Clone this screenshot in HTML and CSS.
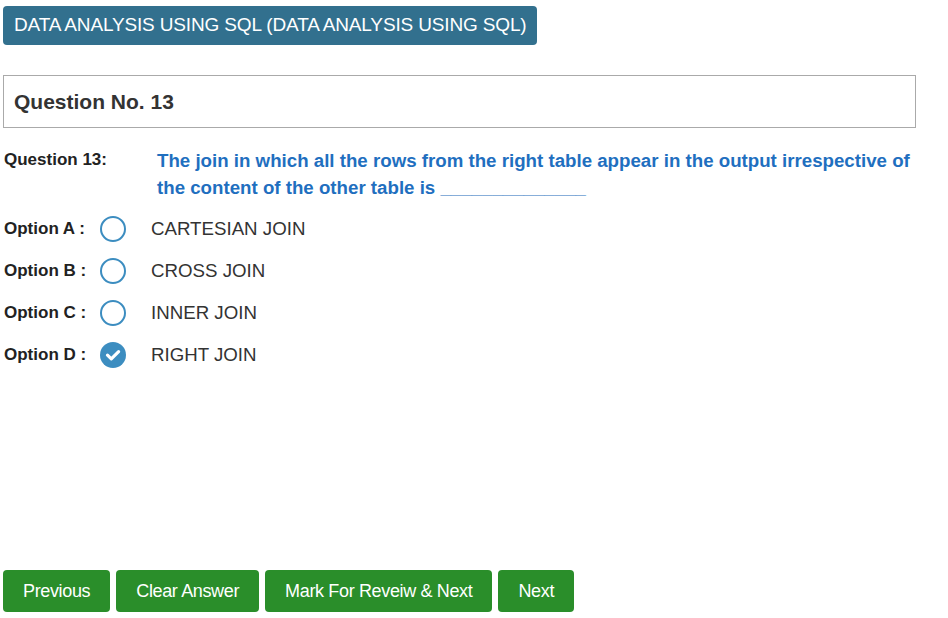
FILE: index.html
```html
<!DOCTYPE html>
<html>
<head>
<meta charset="utf-8">
<link rel="stylesheet" href="styles.css">
</head>
<body>
<div class="page">
  <div class="subject">DATA ANALYSIS USING SQL (DATA ANALYSIS USING SQL)</div>
  <div class="qbox">Question No. 13</div>
  <div class="question">
    <div class="qlabel">Question 13:</div>
    <div class="qtext">The join in which all the rows from the right table appear in the output irrespective of the content of the other table is ______________</div>
  </div>
  <div class="options">
    <div class="opt"><span class="olabel">Option A :</span><span class="radio"></span><span class="otext">CARTESIAN JOIN</span></div>
    <div class="opt"><span class="olabel">Option B :</span><span class="radio"></span><span class="otext">CROSS JOIN</span></div>
    <div class="opt"><span class="olabel">Option C :</span><span class="radio"></span><span class="otext">INNER JOIN</span></div>
    <div class="opt"><span class="olabel">Option D :</span><span class="radio checked"><svg viewBox="0 0 26 26" width="26" height="26"><circle cx="13" cy="13" r="13" fill="#3c8dc0"/><path d="M7.5 13.2 L11.3 16.8 L18.6 9.6" fill="none" stroke="#fff" stroke-width="3.2" stroke-linecap="round" stroke-linejoin="round"/></svg></span><span class="otext">RIGHT JOIN</span></div>
  </div>
  <div class="actions">
    <button class="btn">Previous</button>
    <button class="btn">Clear Answer</button>
    <button class="btn">Mark For Reveiw &amp; Next</button>
    <button class="btn">Next</button>
  </div>
</div>
</body>
</html>
```
FILE: styles.css
```css
html, body { margin: 0; padding: 0; background: #fff; }
body { font-family: "Liberation Sans", Arial, sans-serif; color: #333; }
.page { padding: 6px 32px 0 3px; width: 913px; height: 606px; display: flex; flex-direction: column; }
.subject {
  align-self: flex-start;
  background: #32708e;
  color: #fff;
  font-size: 19px;
  letter-spacing: -0.15px;
  height: 39px;
  line-height: 38px;
  padding: 0 10px 0 11px;
  border-radius: 4px;
}
.qbox {
  margin-top: 30px;
  border: 1px solid #aaa;
  height: 51px;
  line-height: 51px;
  padding-left: 10px;
  font-weight: bold;
  font-size: 21px;
  color: #333;
}
.question { display: flex; margin-top: 19px; padding-left: 1px; }
.qlabel { width: 153px; flex: none; font-weight: bold; font-size: 17px; line-height: 26px; color: #222; }
.qtext { color: #1f6fbf; font-weight: bold; font-size: 18.7px; line-height: 27px; }
.options { margin-top: 15px; padding-left: 1px; display: flex; flex-direction: column; gap: 16px; }
.opt { display: flex; align-items: center; height: 26px; }
.olabel { width: 96px; font-weight: bold; font-size: 17px; color: #222; }
.radio { width: 26px; height: 26px; box-sizing: border-box; border: 2px solid #3c8dc0; border-radius: 50%; flex: none; }
.radio.checked { border: none; }
.radio svg { display: block; }
.otext { margin-left: 25px; font-size: 18.7px; color: #333; }
.actions { margin-top: auto; display: flex; gap: 6px; }
.btn {
  background: #2a8e2a;
  color: #fff;
  border: none;
  border-radius: 4px;
  height: 42px;
  font-family: "Liberation Sans", Arial, sans-serif;
  font-size: 18px;
  letter-spacing: -0.35px;
  padding: 0 20px;
}
```
